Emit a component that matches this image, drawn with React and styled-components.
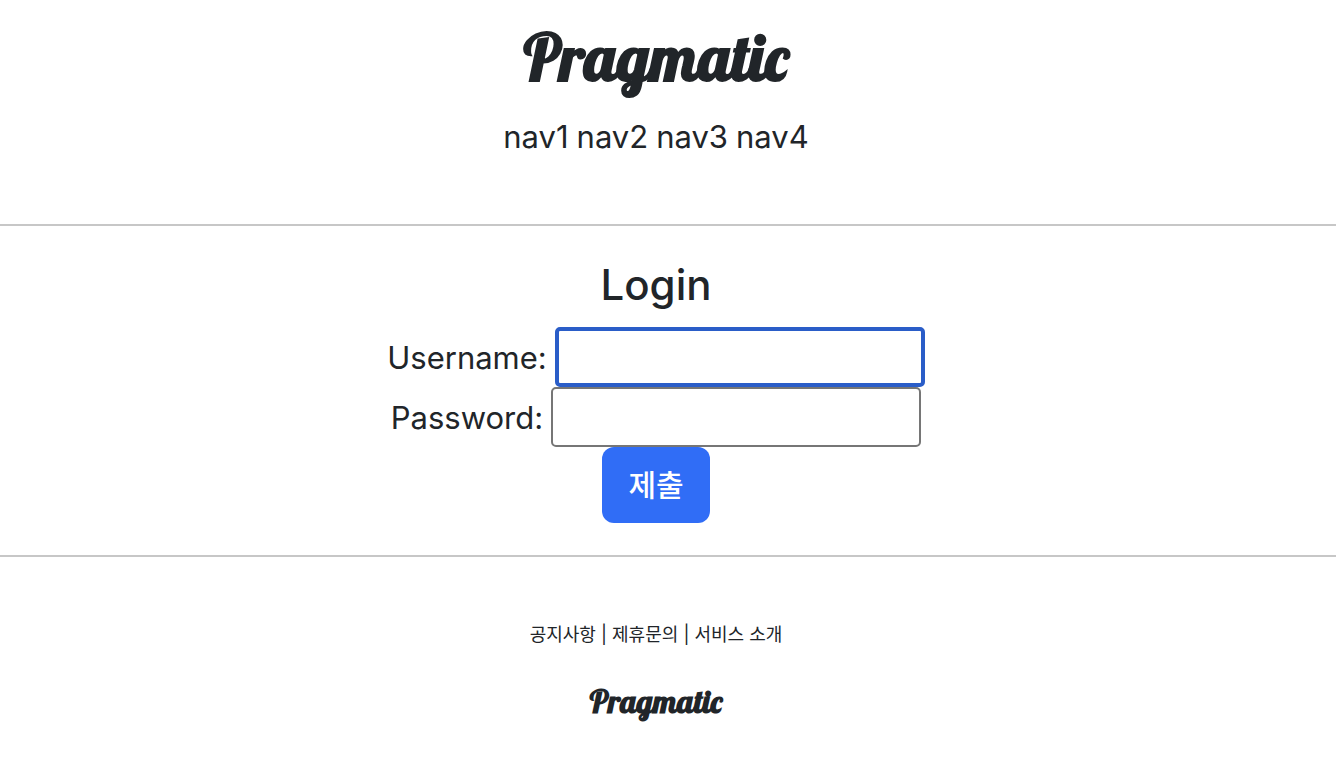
import React, { useState } from "react";
import styled, { createGlobalStyle } from "styled-components";

const GlobalStyle = createGlobalStyle`
*{
    box-sizing: border-box;
}
body{
    margin: 0;
    background: #fff;
    color: #212529;
    font-family: Inter, "Noto Sans CJK KR", sans-serif;
    font-size: 31px;
    line-height: 48px;
}
`

const Section = styled.section`
display: flex;
flex-direction: column;
align-items: center;
padding: ${({ $padding }) => $padding};
`

const Logo = styled.h1`
margin: 0;
font-family: Lobster, "Liberation Serif", cursive;
font-size: ${({ $small }) => ($small ? "32px" : "64px")};
line-height: ${({ $small }) => ($small ? "38px" : "76px")};
font-weight: 700;
`

const Nav = styled.nav`
display: flex;
gap: 8px;
margin-top: 18px;
`

const NavLink = styled.a`
color: inherit;
text-decoration: none;
`

const Divider = styled.hr`
margin: 0;
border: none;
border-top: 2px solid #c7c7c7;
`

const Title = styled.h2`
margin: 0 0 16px;
font-size: 42px;
line-height: 52px;
font-weight: 500;
`

const Form = styled.form`
display: flex;
flex-direction: column;
align-items: center;
`

const Field = styled.div`
display: flex;
align-items: center;
gap: 8px;
`

const Label = styled.label`
padding-top: 2px;
`

const Input = styled.input`
width: 370px;
height: 60px;
padding: 2px 4px;
border: 2px solid #767676;
border-radius: 5px;
background: #fff;
color: inherit;
font: inherit;
outline: none;
caret-color: transparent;

&:focus{
    border: 4px solid #2a5dc8;
}
`

const Submit = styled.button`
height: 76px;
padding: 0 26px 4px;
border: none;
border-radius: 12px;
background: #306df6;
color: #fff;
font-family: "Noto Sans CJK KR", sans-serif;
font-size: 30px;
font-weight: 500;
cursor: pointer;
`

const FooterLinks = styled.div`
margin-bottom: 33px;
font-size: 18px;
line-height: 28px;
`

const App = () => {

    const [username, setUsername] = useState("");
    const [password, setPassword] = useState("");

    const onSubmit = (e) => {
        e.preventDefault();
    };

    return (
        <>
            <GlobalStyle />
            <Section as="header" $padding="19px 24px 63px 0">
                <Logo>Pragmatic</Logo>
                <Nav>
                    <NavLink href="#nav1">nav1</NavLink>
                    <NavLink href="#nav2">nav2</NavLink>
                    <NavLink href="#nav3">nav3</NavLink>
                    <NavLink href="#nav4">nav4</NavLink>
                </Nav>
            </Section>
            <Divider />
            <Section as="main" $padding="33px 24px 32px 0">
                <Title>Login</Title>
                <Form onSubmit={onSubmit}>
                    <Field>
                        <Label htmlFor="username">Username:</Label>
                        <Input type="text" id="username" autoFocus value={username}
                        onChange={(e) => setUsername(e.target.value)} />
                    </Field>
                    <Field>
                        <Label htmlFor="password">Password:</Label>
                        <Input type="password" id="password" value={password}
                        onChange={(e) => setPassword(e.target.value)} />
                    </Field>
                    <Submit type="submit">제출</Submit>
                </Form>
            </Section>
            <Divider />
            <Section as="footer" $padding="64px 24px 40px 0">
                <FooterLinks>
                    <NavLink href="#notice">공지사항</NavLink> | <NavLink href="#partner">제휴문의</NavLink> | <NavLink href="#about">서비스 소개</NavLink>
                </FooterLinks>
                <Logo as="div" $small>Pragmatic</Logo>
            </Section>
        </>
    );
};

export default App;
